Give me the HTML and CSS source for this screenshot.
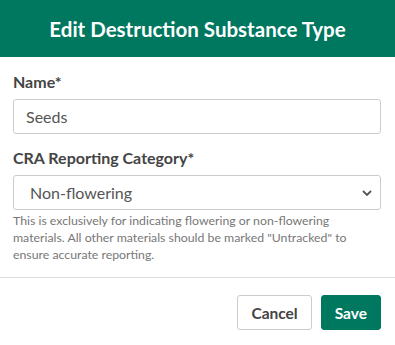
FILE: index.html
```html
<!DOCTYPE html>
<html lang="en">
<head>
    <meta charset="UTF-8">
    <meta name="viewport" content="width=device-width, initial-scale=1.0">
    <title>Edit Destruction Substance Type</title>
    <link rel="stylesheet" href="styles.css">
</head>
<body>
    <div class="modal">
        <div class="modal-header">
            <h2 class="modal-title">Edit Destruction Substance Type</h2>
        </div>
        <div class="modal-body">
            <div class="field">
                <label class="field-label" for="name">Name*</label>
                <input class="field-input" id="name" type="text" value="Seeds">
            </div>
            <div class="field">
                <label class="field-label" for="category">CRA Reporting Category*</label>
                <div class="select-wrap">
                    <select class="field-input field-select" id="category">
                        <option>Non-flowering</option>
                        <option>Flowering</option>
                        <option>Untracked</option>
                    </select>
                    <svg class="chevron" width="10" height="6" viewBox="0 0 10 6">
                        <path d="M1 1l4 4 4-4" fill="none" stroke="#555" stroke-width="1.8"/>
                    </svg>
                </div>
                <p class="field-help">This is exclusively for indicating flowering or non-flowering materials. All other materials should be marked "Untracked" to ensure accurate reporting.</p>
            </div>
        </div>
        <div class="modal-footer">
            <button class="btn btn-default">Cancel</button>
            <button class="btn btn-primary">Save</button>
        </div>
    </div>
</body>
</html>
```

FILE: styles.css
```css
* {
    margin: 0;
    box-sizing: border-box;
}

body {
    font-family: Lato, "Liberation Sans", sans-serif;
    background-color: #fff;
    color: #333;
}

.modal {
    width: 395px;
}

.modal-header {
    background-color: #00775f;
    height: 57px;
    display: flex;
    align-items: center;
    justify-content: center;
}

.modal-title {
    color: #fff;
    font-size: 20.5px;
    font-weight: 700;
}

.modal-body {
    padding: 15px 14px 0 13px;
}

.field {
    margin-bottom: 14px;
}

.field-label {
    display: block;
    font-size: 16px;
    font-weight: 700;
    color: #444;
    margin-bottom: 8px;
}

.field-input {
    display: block;
    width: 100%;
    height: 35px;
    border: 1px solid #ccc;
    border-radius: 3px;
    padding: 0 12px;
    font-family: Lato, "Liberation Sans", sans-serif;
    font-size: 16px;
    color: #555;
    background-color: #fff;
}

.select-wrap {
    position: relative;
    margin-top: 4px;
}

.field-select {
    appearance: none;
    padding-left: 16px;
}

.chevron {
    position: absolute;
    right: 9px;
    top: 15px;
    pointer-events: none;
}

.field-help {
    font-size: 12.3px;
    line-height: 17px;
    color: #777;
    margin-top: 2px;
}

.modal-footer {
    border-top: 1px solid #ddd;
    margin-top: 10px;
    padding: 17px 14px 12px;
    display: flex;
    justify-content: flex-end;
    gap: 9px;
}

.btn {
    height: 35px;
    border-radius: 3px;
    font-family: Lato, "Liberation Sans", sans-serif;
    font-size: 15.5px;
    font-weight: 700;
    padding: 0 13px;
}

.btn-default {
    background-color: #fff;
    border: 1px solid #ccc;
    color: #444;
}

.btn-primary {
    background-color: #00775f;
    border: 1px solid #00775f;
    color: #fff;
}
```
